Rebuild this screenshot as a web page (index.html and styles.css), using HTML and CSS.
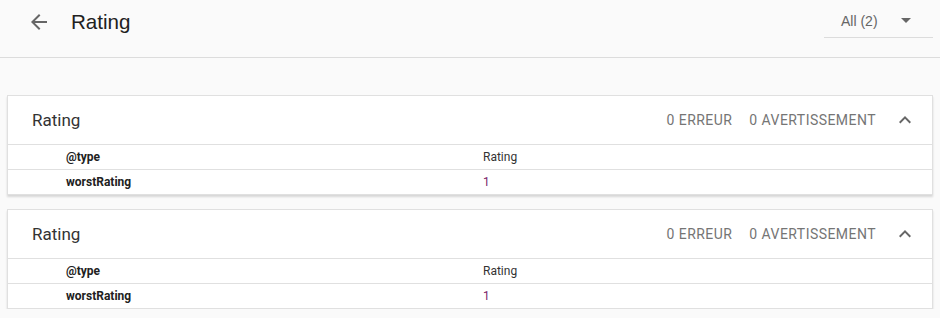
FILE: index.html
```html
<!DOCTYPE html>
<html>
	<head>
		<meta charset="UTF-8">
		<title>Rating</title>
		<link rel="stylesheet" href="styles.css">
	</head>
	<body>
		<div id="top">
			<svg class="back" width="24" height="24" viewBox="0 0 24 24"><path d="M20 11H7.83l5.59-5.59L12 4l-8 8 8 8 1.41-1.41L7.83 13H20v-2z" fill="#666"/></svg>
			<span class="title">Rating</span>
			<div class="filter">
				<span>All (2)</span>
				<svg width="10" height="5" viewBox="0 0 10 5"><path d="M0 0l5 5 5-5z" fill="#666"/></svg>
			</div>
		</div>

		<div id="list">
			<!--bloc 1-->
			<div class="card">
				<div class="card-head">
					<span class="card-title">Rating</span>
					<span class="count err">0 erreur</span>
					<span class="count">0 avertissement</span>
					<svg class="toggle" width="24" height="24" viewBox="0 0 24 24"><path d="M12 8l-6 6 1.41 1.41L12 10.83l4.59 4.58L18 14z" fill="#666"/></svg>
				</div>
				<div class="row">
					<span class="key">@type</span>
					<span class="val">Rating</span>
				</div>
				<div class="row">
					<span class="key">worstRating</span>
					<span class="val num">1</span>
				</div>
			</div>
			<!--bloc 2-->
			<div class="card">
				<div class="card-head">
					<span class="card-title">Rating</span>
					<span class="count err">0 erreur</span>
					<span class="count">0 avertissement</span>
					<svg class="toggle" width="24" height="24" viewBox="0 0 24 24"><path d="M12 8l-6 6 1.41 1.41L12 10.83l4.59 4.58L18 14z" fill="#666"/></svg>
				</div>
				<div class="row">
					<span class="key">@type</span>
					<span class="val">Rating</span>
				</div>
				<div class="row">
					<span class="key">worstRating</span>
					<span class="val num">1</span>
				</div>
			</div>
		</div>
	</body>
</html>
```

FILE: styles.css
```css
* {
	margin: 0;
	padding: 0;
}

body {
	background: #fafafa;
	font-family: Roboto, "Liberation Sans", sans-serif;
	color: #212121;
}

#top {
	height: 57px;
	border-bottom: 1px solid #dcdcdc;
	display: flex;
	align-items: flex-start;
	padding-left: 27px;
	padding-right: 7px;
}

.back {
	margin-top: 10px;
}

.title {
	font-family: "Liberation Sans", Arial, sans-serif;
	font-size: 20.6px;
	line-height: 24px;
	margin-top: 10px;
	margin-left: 20px;
	color: #212121;
}

.filter {
	margin-left: auto;
	margin-top: 4px;
	width: 109px;
	height: 34px;
	box-sizing: border-box;
	border-bottom: 1px solid #dcdcdc;
	display: flex;
	align-items: center;
	justify-content: space-between;
	padding-left: 17px;
	padding-right: 22px;
	font-family: "Liberation Sans", Arial, sans-serif;
	font-size: 14px;
	color: #666;
}

#list {
	padding: 37px 7px 0 7px;
	display: flex;
	flex-direction: column;
	gap: 14px;
}

.card {
	background: #fff;
	border: 1px solid #e0e0e0;
	box-shadow: 0 2px 2px rgba(0, 0, 0, 0.14);
}

.card-head {
	height: 48px;
	display: flex;
	align-items: center;
	padding-left: 24px;
	padding-right: 15px;
}

.card-title {
	font-size: 17px;
	color: #333;
	flex: 1;
	margin-top: -1px;
}

.count {
	font-size: 14px;
	text-transform: uppercase;
	color: #757575;
	letter-spacing: 0.45px;
}

.count.err {
	margin-right: 17px;
}

.toggle {
	margin-left: 17px;
}

.row {
	border-top: 1px solid #e0e0e0;
	height: 24px;
	display: flex;
	align-items: center;
	padding-left: 58px;
	font-size: 12px;
}

.key {
	width: 417px;
	font-weight: bold;
	color: #212121;
}

.val {
	color: #333;
}

.val.num {
	color: #7a1b6a;
}
```
